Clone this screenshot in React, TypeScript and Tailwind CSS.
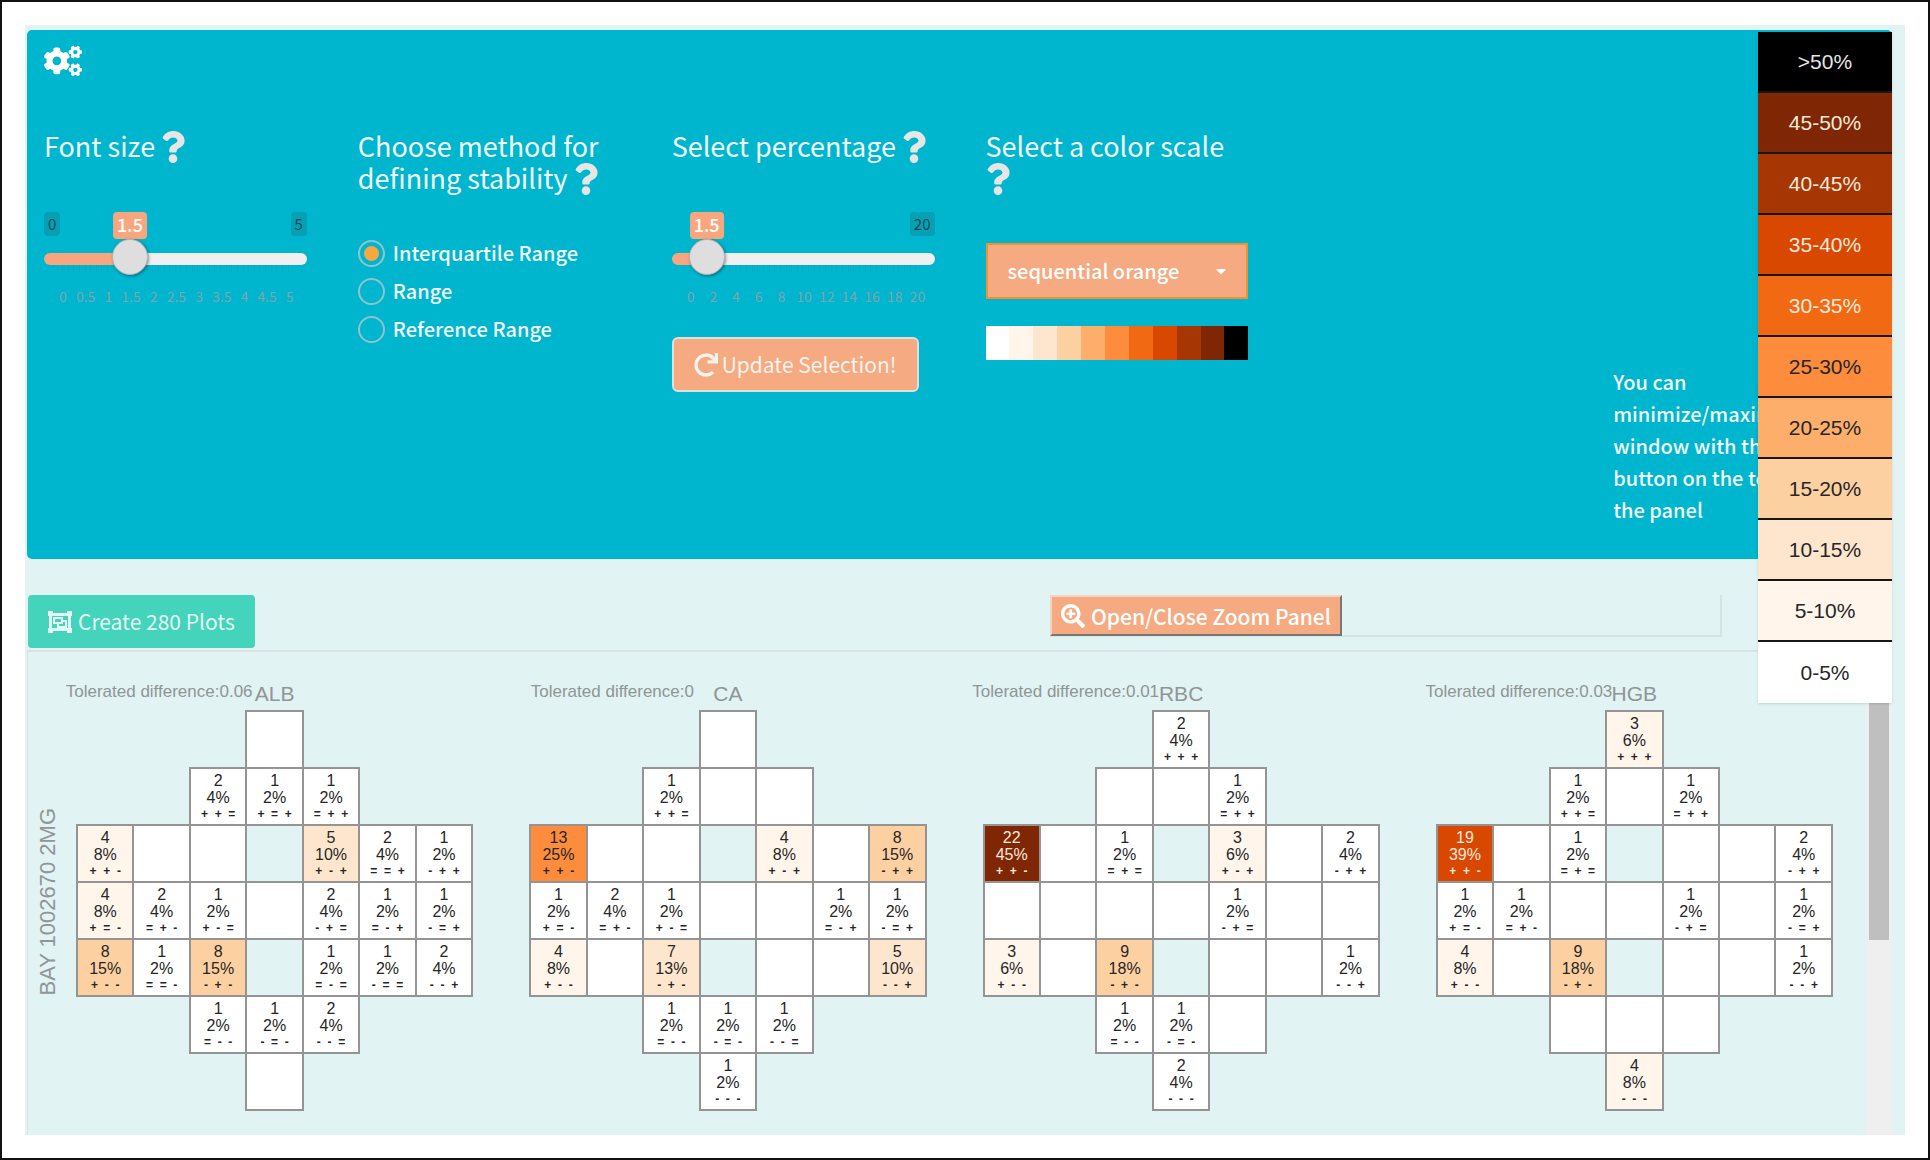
import { useState, type CSSProperties, type ReactNode } from "react";
import { FaCogs, FaQuestion, FaRedo, FaSearchPlus, FaCaretDown } from "react-icons/fa";

const SANS = "font-['Noto_Sans_CJK_SC','Noto_Sans',sans-serif]";
const ARIAL = "font-['Liberation_Sans',Arial,sans-serif]";

const SCALE = [
  { label: "0-5%", bg: "bg-white", fg: "text-neutral-800" },
  { label: "5-10%", bg: "bg-[#fff5eb]", fg: "text-neutral-800" },
  { label: "10-15%", bg: "bg-[#fee6ce]", fg: "text-neutral-800" },
  { label: "15-20%", bg: "bg-[#fdd0a2]", fg: "text-neutral-800" },
  { label: "20-25%", bg: "bg-[#fdae6b]", fg: "text-neutral-800" },
  { label: "25-30%", bg: "bg-[#fd8d3c]", fg: "text-neutral-800" },
  { label: "30-35%", bg: "bg-[#f16913]", fg: "text-[#fbe9dc]" },
  { label: "35-40%", bg: "bg-[#d94801]", fg: "text-[#fbe9dc]" },
  { label: "40-45%", bg: "bg-[#a63603]", fg: "text-[#fbe9dc]" },
  { label: "45-50%", bg: "bg-[#7f2704]", fg: "text-[#fbe9dc]" },
  { label: ">50%", bg: "bg-black", fg: "text-neutral-200" },
];

function bucket(pct: number) {
  return SCALE[Math.min(10, Math.floor(pct / 5))];
}

type Plot = { name: string; tolerance: string; cells: Record<string, string> };

/* Keys are "row-column"; values are "count percent signs". */
const PLOTS: Plot[] = [
  {
    name: "ALB",
    tolerance: "0.06",
    cells: {
      "1-2": "2 4 ++=", "1-3": "1 2 +=+", "1-4": "1 2 =++",
      "2-0": "4 8 ++-", "2-4": "5 10 +-+", "2-5": "2 4 ==+", "2-6": "1 2 -++",
      "3-0": "4 8 +=-", "3-1": "2 4 =+-", "3-2": "1 2 +-=", "3-4": "2 4 -+=", "3-5": "1 2 =-+", "3-6": "1 2 -=+",
      "4-0": "8 15 +--", "4-1": "1 2 ==-", "4-2": "8 15 -+-", "4-4": "1 2 =-=", "4-5": "1 2 -==", "4-6": "2 4 --+",
      "5-2": "1 2 =--", "5-3": "1 2 -=-", "5-4": "2 4 --=",
    },
  },
  {
    name: "CA",
    tolerance: "0",
    cells: {
      "1-2": "1 2 ++=",
      "2-0": "13 25 ++-", "2-4": "4 8 +-+", "2-6": "8 15 -++",
      "3-0": "1 2 +=-", "3-1": "2 4 =+-", "3-2": "1 2 +-=", "3-5": "1 2 =-+", "3-6": "1 2 -=+",
      "4-0": "4 8 +--", "4-2": "7 13 -+-", "4-6": "5 10 --+",
      "5-2": "1 2 =--", "5-3": "1 2 -=-", "5-4": "1 2 --=",
      "6-3": "1 2 ---",
    },
  },
  {
    name: "RBC",
    tolerance: "0.01",
    cells: {
      "0-3": "2 4 +++", "1-4": "1 2 =++",
      "2-0": "22 45 ++-", "2-2": "1 2 =+=", "2-4": "3 6 +-+", "2-6": "2 4 -++",
      "3-4": "1 2 -+=",
      "4-0": "3 6 +--", "4-2": "9 18 -+-", "4-6": "1 2 --+",
      "5-2": "1 2 =--", "5-3": "1 2 -=-",
      "6-3": "2 4 ---",
    },
  },
  {
    name: "HGB",
    tolerance: "0.03",
    cells: {
      "0-3": "3 6 +++", "1-2": "1 2 ++=", "1-4": "1 2 =++",
      "2-0": "19 39 ++-", "2-2": "1 2 =+=", "2-6": "2 4 -++",
      "3-0": "1 2 +=-", "3-1": "1 2 =+-", "3-4": "1 2 -+=", "3-6": "1 2 -=+",
      "4-0": "4 8 +--", "4-2": "9 18 -+-", "4-6": "1 2 --+",
      "6-3": "4 8 ---",
    },
  },
];

/* X marks a framed cell, o a see-through one inside the shape. */
const SHAPE = ["...X...", "..XXX..", "XXXoXXX", "XXXXXXX", "XXXoXXX", "..XXX..", "...X..."];

function PlotCell({ kind, value }: { kind: string; value?: string }) {
  if (kind !== "X") return <td />;
  if (!value) return <td className="border-2 border-[#949494] bg-white" />;
  const [count, pct, signs] = value.split(" ");
  const { bg, fg } = bucket(Number(pct));
  return (
    <td className={`border-2 border-[#949494] p-0 text-center align-middle ${bg} ${fg}`}>
      <div>{count}</div>
      <div>{pct}%</div>
      <div className="text-[12px] leading-[16px] font-bold whitespace-pre">{signs.split("").join("  ")}</div>
    </td>
  );
}

function PlotTable({ plot }: { plot: Plot }) {
  return (
    <section className={`${ARIAL} min-w-0`}>
      <div className="grid h-7 grid-cols-7 text-[#909595]">
        <p className="col-span-3 flex justify-center pr-1 text-[17px] leading-[20px] whitespace-nowrap">
          Tolerated difference:{plot.tolerance}
        </p>
        <h3 className="flex justify-center text-[21px] leading-[24px]">{plot.name}</h3>
      </div>
      <table aria-label={plot.name} className="w-full table-fixed border-collapse text-[16px] leading-[17px]">
        <tbody>
          {SHAPE.map((row, r) => (
            <tr key={r} className="h-[57px]">
              {row.split("").map((kind, c) => (
                <PlotCell key={c} kind={kind} value={plot.cells[`${r}-${c}`]} />
              ))}
            </tr>
          ))}
        </tbody>
      </table>
    </section>
  );
}

function GroupIcon() {
  return (
    <svg viewBox="0 0 24 22" className="h-[22px] w-6" fill="currentColor" aria-hidden="true">
      <path fillRule="evenodd" d="M0 0h5v2h14V0h5v5h-1v12h1v5h-5v-2H5v2H0v-5h1V5H0zM4 5v12h16V5z" />
      <path fillRule="evenodd" d="M5 6h10v3h4v8H9v-4H5zM7 8v3h6V8zM11 13v2h6v-4h-2v2z" />
    </svg>
  );
}

function Help() {
  return <FaQuestion aria-label="Help" className="-my-2 inline-block h-8 w-6 align-[2px] text-[#e6e6e6]" />;
}

function Heading({ children }: { children: ReactNode }) {
  return <h2 className="min-h-16 text-[27px] leading-[32px]">{children}</h2>;
}

function Slider(props: { label: string; max: number; step: number; ticks: number; showMin?: boolean }) {
  const { label, max, ticks, step, showMin } = props;
  const [value, setValue] = useState(1.5);
  const center = `calc(18px + ${value / max} * (100% - 36px))`;
  const marks = Array.from({ length: 11 }, (_, i) => (i * max) / 10);
  return (
    <div className="mt-[18px]">
      <div className="relative flex h-[27px] justify-between text-[15px] leading-[24px] text-[#0d4a55]">
        <span>{showMin && <span className="block h-6 rounded bg-[#06a0b4] px-1">0</span>}</span>
        <span className="h-6 rounded bg-[#06a0b4] px-1">{max}</span>
        <output
          className="absolute top-0 h-[27px] -translate-x-1/2 rounded bg-[#f9a67e] px-1 text-[18px] font-medium text-white"
          style={{ left: center }}
        >
          {value}
        </output>
      </div>
      <input
        type="range"
        aria-label={label}
        min={0}
        max={max}
        step={step}
        value={value}
        onChange={(e) => setValue(Number(e.target.value))}
        style={{ "--fill": center } as CSSProperties}
        className="relative z-10 mt-[14px] block h-3 w-full appearance-none bg-transparent [&::-webkit-slider-runnable-track]:h-3 [&::-webkit-slider-runnable-track]:rounded-full [&::-webkit-slider-runnable-track]:bg-[linear-gradient(to_right,#f9a67e_var(--fill),#f0f0f0_var(--fill))] [&::-webkit-slider-thumb]:-mt-[14px] [&::-webkit-slider-thumb]:size-9 [&::-webkit-slider-thumb]:appearance-none [&::-webkit-slider-thumb]:rounded-full [&::-webkit-slider-thumb]:border [&::-webkit-slider-thumb]:border-[#b5b5b5] [&::-webkit-slider-thumb]:bg-[#dedede] [&::-webkit-slider-thumb]:shadow-[1px_1px_3px_#00000066]"
      />
      <div className="flex h-[8px] justify-between px-[18px]">
        {Array.from({ length: ticks }, (_, i) => (
          <span key={i} className="h-[7px] w-px bg-[#0caabf]" />
        ))}
      </div>
      <div className="mt-[13px] flex justify-between pr-[17px] pl-[19px] text-[14px] leading-[20px] text-[#7fa5ae]">
        {marks.map((m) => (
          <span key={m} className="flex w-0 justify-center">{m}</span>
        ))}
      </div>
    </div>
  );
}

function StabilityMethod() {
  const [method, setMethod] = useState("Interquartile Range");
  return (
    <fieldset aria-label="Method for defining stability" className="mt-[45px] flex flex-col gap-[10px]">
      {["Interquartile Range", "Range", "Reference Range"].map((name) => (
        <label key={name} className="flex h-7 items-center gap-2 text-[20px] leading-[24px] font-medium whitespace-nowrap">
          <input
            type="radio"
            name="method"
            checked={method === name}
            onChange={() => setMethod(name)}
            className="size-[27px] shrink-0 appearance-none rounded-full border-2 border-[#8fc4cc] bg-clip-content p-1 checked:bg-[#f5a742]"
          />
          {name}
        </label>
      ))}
    </fieldset>
  );
}

function Settings() {
  return (
    <section className="overflow-hidden rounded-[5px] bg-[#00b5ce] pr-4 pb-[33px] pl-[17px] text-[#f1fbfc]">
      <button type="button" aria-label="Settings" className="mt-3 flex h-10 items-start">
        <FaCogs className="size-[38px] text-white" />
      </button>
      <div className="mt-12 grid grid-cols-6 gap-x-[51px]">
        <div>
          <Heading>Font size <Help /></Heading>
          <Slider label="Font size" max={5} step={0.5} ticks={41} showMin />
        </div>
        <div>
          <Heading>Choose method for defining stability <Help /></Heading>
          <StabilityMethod />
        </div>
        <div>
          <Heading>Select percentage <Help /></Heading>
          <Slider label="Select percentage" max={20} step={0.5} ticks={41} />
          <button type="button" className="mt-[31px] flex h-[55px] items-center gap-1 rounded-md border-2 border-[#dfe0dc] bg-[#f5aa82] px-5 text-[21px] whitespace-nowrap text-[#f4f4ec]">
            <FaRedo className="size-6" />
            Update Selection!
          </button>
        </div>
        <div>
          <Heading>Select a color scale <Help /></Heading>
          <div className="relative mt-[49px]">
            <select aria-label="Color scale" className="h-14 w-full appearance-none border-2 border-[#ec9430] bg-[#f5aa82] px-5 text-[20px] font-medium text-white">
              <option>sequential orange</option>
            </select>
            <FaCaretDown className="pointer-events-none absolute top-5 right-5 h-4 w-[14px] text-white" />
          </div>
          <div className="mt-[27px] flex h-[34px]">
            {SCALE.map((s) => (
              <span key={s.label} className={`flex-1 ${s.bg}`} />
            ))}
          </div>
        </div>
        <p className="col-start-6 mt-[236px] w-[210px] text-[20px] leading-[32px] font-medium">
          You can minimize/maximize window with the button on the top of the panel
        </p>
      </div>
    </section>
  );
}

function Legend() {
  return (
    <ul className={`${ARIAL} absolute top-[7px] right-[13px] w-[134px] bg-white text-[21px] shadow-sm`}>
      {[...SCALE].reverse().map((s) => (
        <li key={s.label} className={`flex h-[61px] items-center justify-center border-b-2 border-neutral-900 last:border-b-0 ${s.bg} ${s.fg}`}>
          {s.label}
        </li>
      ))}
    </ul>
  );
}

export default function App() {
  return (
    <div className={`${SANS} flex min-h-screen flex-col border-2 border-[#111] bg-white p-[23px]`}>
      <main className="relative flex flex-1 flex-col bg-[#e1f3f2] pt-[5px] pr-[13px] pl-[2px]">
        <Settings />
        <div className="mt-9 flex items-start justify-between pr-[170px] pl-px">
          <button type="button" className="flex h-[53px] items-center gap-[6px] rounded bg-[#44d3bb] px-5 text-[21px] whitespace-nowrap text-[#e4f8f4]">
            <GroupIcon />
            Create 280 Plots
          </button>
          <div className="flex h-[42px] w-[672px] items-start border-r-2 border-b-2 border-[#d6e5e4]">
            <button type="button" className="flex h-[41px] items-center gap-[6px] border-2 border-t-[#f3d3c3] border-r-[#777] border-b-[#777] border-l-[#f3d3c3] bg-[#f5aa82] px-[9px] text-[21px] leading-[28px] font-medium whitespace-nowrap text-white">
              <FaSearchPlus className="size-6" />
              Open/Close Zoom Panel
            </button>
          </div>
        </div>
        <div className="mt-[2px] flex flex-1 border-t-2 border-l border-[#d9e3e3]">
          <div className="flex flex-1 items-start pt-[30px] pr-[33px]">
            <div className={`${ARIAL} flex h-[440px] w-12 shrink-0 items-center pl-2 text-[22px] leading-[24px] text-[#909595]`}>
              <h2 className="rotate-180 whitespace-nowrap [writing-mode:vertical-rl]">BAY 1002670 2MG</h2>
            </div>
            <div className="grid flex-1 grid-cols-4 gap-x-14">
              {PLOTS.map((p) => (
                <PlotTable key={p.name} plot={p} />
              ))}
            </div>
          </div>
          <div className="w-[26px] bg-[#efefef] px-[3px]">
            <div className="h-72 bg-[#bfbfbf]" />
          </div>
        </div>
        <Legend />
      </main>
    </div>
  );
}
